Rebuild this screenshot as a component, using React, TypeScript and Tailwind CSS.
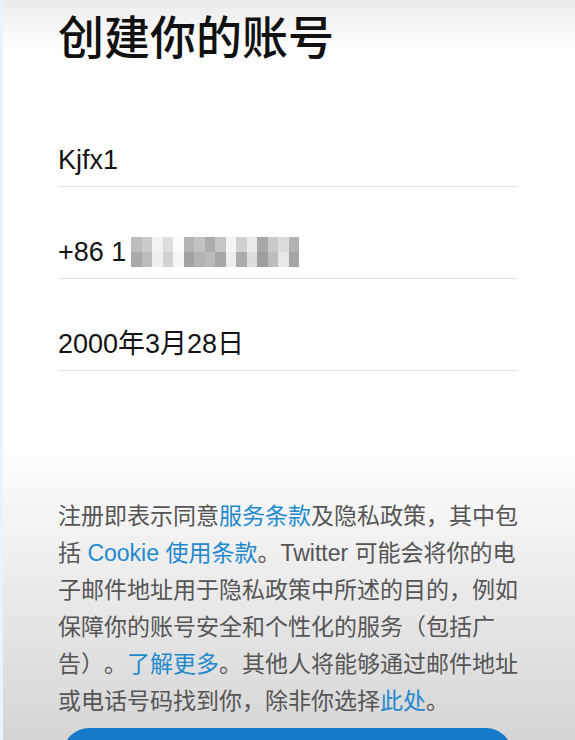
import React from 'react'

const cjk = "font-['Liberation_Sans','Noto_Sans_CJK_SC',sans-serif]"

// pixelated blur over the phone number: [top, bottom] cell colours per column
const blurCols: [string, string][] = [
  ['bg-[#bdbdbd]', 'bg-[#a9a9a9]'],
  ['bg-[#cbcbcb]', 'bg-[#bcbcbc]'],
  ['bg-[#f3f3f3]', 'bg-[#efefef]'],
  ['bg-[#dedede]', 'bg-[#d2d2d2]'],
  ['bg-[#fbfbfb]', 'bg-[#f6f6f6]'],
  ['bg-[#b4b4b4]', 'bg-[#a2a2a2]'],
  ['bg-[#c2c2c2]', 'bg-[#b3b3b3]'],
  ['bg-[#acacac]', 'bg-[#bababa]'],
  ['bg-[#c6c6c6]', 'bg-[#a7a7a7]'],
  ['bg-[#f4f4f4]', 'bg-[#ededed]'],
  ['bg-[#d0d0d0]', 'bg-[#ababab]'],
  ['bg-[#ebebeb]', 'bg-[#dddddd]'],
  ['bg-[#a8a8a8]', 'bg-[#9e9e9e]'],
  ['bg-[#c9c9c9]', 'bg-[#bdbdbd]'],
  ['bg-[#dcdcdc]', 'bg-[#e7e7e7]'],
  ['bg-[#b2b2b2]', 'bg-[#a5a5a5]'],
]

function Field({ children }: { children: React.ReactNode }) {
  return (
    <div className="flex h-[92px] flex-col justify-end border-b border-[#e3e3e3]">
      <div className="mb-[10px] flex items-center text-[27px] leading-[32px] text-[#141414]">
        {children}
      </div>
    </div>
  )
}

function Link({ children }: { children: React.ReactNode }) {
  return <span className="text-[#2389cf]">{children}</span>
}

export default function App() {
  return (
    <div
      className={`${cjk} h-[740px] w-[575px] overflow-hidden border-l-[3px] border-[#e6f5f8] bg-[linear-gradient(to_bottom,#ebebeb_0px,#ffffff_50px,#ffffff_440px,#d5d5d5_740px)]`}
    >
      <div className="pl-[55px] pr-[57px]">
        <h1 className="pt-[10px] text-[46px] font-medium leading-[56px] text-[#111]">
          创建你的账号
        </h1>

        <div className="mt-[29px]">
          <Field>Kjfx1</Field>
          <Field>
            <span>+86 1</span>
            <span className="ml-[5px] flex">
              {blurCols.map(([top, bottom], i) => (
                <span key={i} className="flex w-[10.5px] flex-col">
                  <span className={`h-[15px] ${top}`} />
                  <span className={`h-[15px] ${bottom}`} />
                </span>
              ))}
            </span>
          </Field>
          <Field>2000年3月28日</Field>
        </div>

        <p className="mt-[127px] whitespace-nowrap text-[23px] leading-[37px] text-[#555] [text-spacing-trim:space-all]">
          注册即表示同意<Link>服务条款</Link>及隐私政策，其中包
          <br />
          括 <Link>Cookie 使用条款</Link>。Twitter 可能会将你的电
          <br />
          子邮件地址用于隐私政策中所述的目的，例如
          <br />
          保障你的账号安全和个性化的服务（包括广
          <br />
          告）。<Link>了解更多</Link>。其他人将能够通过邮件地址
          <br />
          或电话号码找到你，除非你选择<Link>此处</Link>。
        </p>

        <button className="mx-[5px] mt-[8px] h-[52px] w-[449px] rounded-full bg-[#1679cb]" />
      </div>
    </div>
  )
}
